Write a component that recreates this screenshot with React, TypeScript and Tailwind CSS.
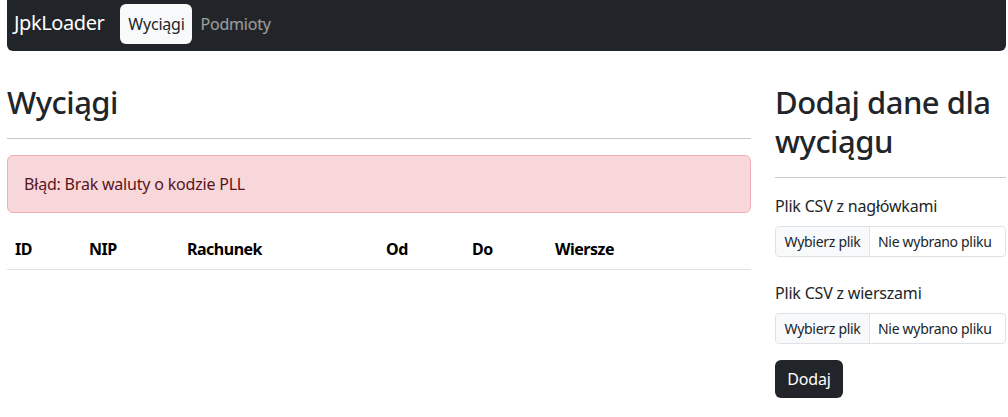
import React from 'react';

const columns = [
  { label: 'ID', w: 'w-[74px]' },
  { label: 'NIP', w: 'w-[98px]' },
  { label: 'Rachunek', w: 'w-[199px]' },
  { label: 'Od', w: 'w-[86px]' },
  { label: 'Do', w: 'w-[83px]' },
  { label: 'Wiersze', w: '' },
];

const FileInput: React.FC = () => (
  <div className="flex h-[31px] w-full items-stretch overflow-hidden whitespace-nowrap rounded-[4px] border border-[#dee2e6] text-[14px] leading-[21px] tracking-[-0.3px] text-[#212529]">
    <div className="flex w-[94px] items-center justify-center border-r border-[#dee2e6] bg-[#f8f9fa]">Wybierz plik</div>
    <div className="flex items-center px-2">Nie wybrano pliku</div>
  </div>
);

export default function App() {
  return (
    <div className="min-h-screen bg-white pl-[7px] pr-[2px] font-['Noto_Sans','Open_Sans',sans-serif] text-[16px] leading-6 tracking-[-0.2px] text-[#212529]">
      {/* Navbar */}
      <nav className="flex h-[51px] items-start rounded-b-[6px] bg-[#212529] pl-[7px] pt-1">
        <a className="mr-4 mt-[4px] text-[20px] leading-[30px] tracking-[-0.4px] text-white">JpkLoader</a>
        <a className="flex h-10 w-[72px] items-center justify-center rounded-[6px] bg-[#f8f9fa] text-[#212529]">Wyciągi</a>
        <a className="flex h-10 items-center px-2 text-white/55">Podmioty</a>
      </nav>

      <div className="mt-8 flex gap-6">
        {/* Left column */}
        <div className="w-[744px]">
          <h1 className="text-[31px] leading-[39px] font-medium tracking-[-0.5px]">Wyciągi</h1>
          <hr className="my-4 border-t border-[#c8c8c8]" />
          <div className="mb-4 rounded-[6px] border border-[#f1aeb5] bg-[#f8d7da] p-4 text-[#58151c]">
            Błąd: Brak waluty o kodzie PLL
          </div>
          <table className="w-full table-fixed border-collapse text-left">
            <thead>
              <tr className="border-b border-[#dee2e6]">
                {columns.map((c) => (
                  <th key={c.label} className={`${c.w} px-2 py-2 font-bold tracking-[-0.5px] text-black`}>
                    {c.label}
                  </th>
                ))}
              </tr>
            </thead>
          </table>
        </div>

        {/* Right column */}
        <div className="w-[231px]">
          <h2 className="text-[31px] leading-[39px] font-medium tracking-[-0.5px]">Dodaj dane dla wyciągu</h2>
          <hr className="my-4 border-t border-[#c8c8c8]" />
          <form>
            <div className="mb-6">
              <label className="mb-2 block">Plik CSV z nagłówkami</label>
              <FileInput />
            </div>
            <div className="mb-4">
              <label className="mb-2 block">Plik CSV z wierszami</label>
              <FileInput />
            </div>
            <button type="button" className="h-[38px] w-[68px] rounded-[6px] bg-[#212529] text-white">
              Dodaj
            </button>
          </form>
        </div>
      </div>
    </div>
  );
}
